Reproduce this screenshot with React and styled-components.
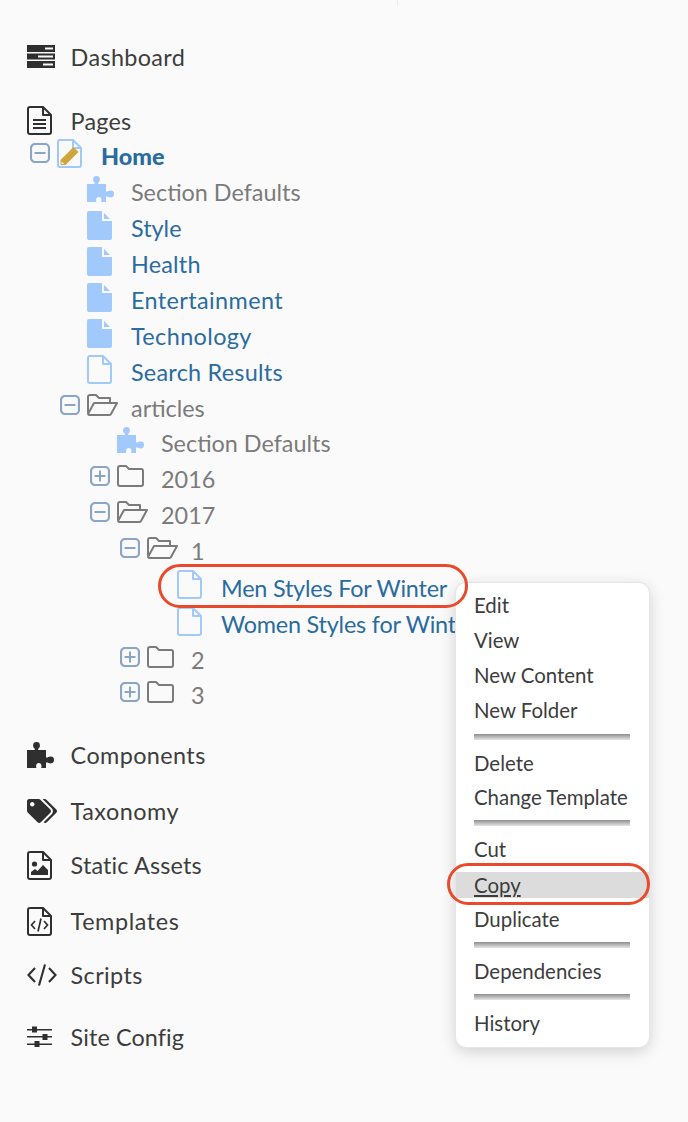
import React from 'react';
import styled, { createGlobalStyle } from 'styled-components';
import { FaTags } from 'react-icons/fa';

const GlobalStyle = createGlobalStyle`
  html, body {
    margin: 0;
    padding: 0;
    background: #fafafa;
  }
  body {
    font-family: 'Lato', 'Noto Sans', sans-serif;
  }
`;

const INK = '#3d3d3d';
const LINK = '#2a6c9f';
const MUTED = '#7b7b7b';
const SKY = '#a2c9fb';
const BOX = '#8aa5c5';
const RED = '#e94a2b';

const Page = styled.div`
  position: relative;
  width: 688px;
  height: 1122px;
  overflow: hidden;
  background: #fafafa;
`;

const TopTick = styled.div`
  position: absolute;
  left: 397px;
  top: 0;
  width: 1px;
  height: 6px;
  background: #eeeeee;
`;

const Nav = styled.nav`
  padding: 38px 0 0 27px;
  display: flex;
  flex-direction: column;
`;

const NavRow = styled.div`
  display: grid;
  grid-template-columns: 43.6px auto;
  align-items: center;
  height: 36px;
  margin-top: ${p => p.$gap || 0}px;
  color: ${INK};
  font-size: 23.4px;
  letter-spacing: ${p => p.$track ?? 0.2}px;
`;

const NavLabel = styled.span`
  padding-top: ${p => (p.$low ? 2 : 0)}px;
`;

const NavIcon = styled.span`
  display: flex;
  align-items: center;
  color: #2f2f2f;
`;

const Tree = styled.ul`
  list-style: none;
  margin: 0;
  padding: 0 0 0 3px;
`;

const TreeRow = styled.li`
  display: grid;
  grid-template-columns: 27px 44px auto;
  align-items: center;
  height: ${p => p.$h || 36}px;
  margin-left: ${p => p.$depth * 30}px;
  font-size: 23.4px;
  letter-spacing: ${p => p.$track ?? 0}px;
  white-space: nowrap;
  color: ${p => (p.$link ? LINK : MUTED)};
  font-weight: ${p => (p.$bold ? 900 : 400)};
`;

const Slot = styled.span`
  display: flex;
  align-items: center;
  height: 100%;
  transform: translateY(-3px);
`;

const Menu = styled.ul`
  position: absolute;
  left: 456px;
  top: 583px;
  width: 193px;
  height: 464px;
  box-sizing: border-box;
  margin: 0;
  padding: 3px 0 0;
  list-style: none;
  background: #ffffff;
  border-radius: 10px;
  box-shadow: 0 0 0 1px #e6e6e6, 0 4px 16px rgba(0, 0, 0, 0.18);
  color: ${INK};
  font-size: 20.4px;
`;

const MenuItem = styled.li`
  display: flex;
  align-items: center;
  box-sizing: border-box;
  height: ${p => p.$h || 35}px;
  margin-top: ${p => p.$top || 0}px;
  padding: ${p => (p.$active ? 0 : 2)}px 0 0 18px;
  background: ${p => (p.$active ? '#dcdcdc' : 'transparent')};
  text-decoration: ${p => (p.$active ? 'underline' : 'none')};
  white-space: nowrap;
`;

const MenuRule = styled.li`
  height: 6px;
  margin: ${p => p.$top || 7}px 19px 4px 18px;
  background: linear-gradient(#8e8e8e, #e6e6e6);
`;

const Callout = styled.div`
  position: absolute;
  left: ${p => p.$x}px;
  top: ${p => p.$y}px;
  width: ${p => p.$w}px;
  height: ${p => p.$h}px;
  box-sizing: border-box;
  border: 3px solid ${RED};
  border-radius: 24px;
  pointer-events: none;
`;

const Server = () => (
  <svg width="28" height="23" viewBox="0 0 28 23">
    <path
      fill="#2f2f2f"
      fillRule="evenodd"
      d="M0 0h28v7H0zM18 2.5v2h8v-2zM0 8.5h28v6H0zM11 10.5v2h15v-2zM0 16h28v7H0zM16 18.5v2h10v-2z"
    />
  </svg>
);

const DocOutline = ({ children, color = '#2f2f2f' }) => (
  <svg width="25" height="29" viewBox="0 0 25 29" fill="none">
    <path
      d="M3 1H16L24 9V26a2 2 0 0 1-2 2H3a2 2 0 0 1-2-2V3a2 2 0 0 1 2-2ZM16 1V9H24"
      stroke={color}
      strokeWidth="2"
      strokeLinejoin="round"
    />
    {children}
  </svg>
);

const PagesIcon = () => (
  <DocOutline>
    <path d="M6 14H19M6 18H19M6 22H19" stroke="#2f2f2f" strokeWidth="2" />
  </DocOutline>
);

const ImageDoc = () => (
  <DocOutline>
    <circle cx="7.5" cy="13" r="2.6" fill="#2f2f2f" />
    <path d="M4 24V21L8 18L10.5 20L16 14L21 19V24Z" fill="#2f2f2f" />
  </DocOutline>
);

const CodeDoc = () => (
  <DocOutline>
    <path
      d="M8 14L4.5 18L8 22M17 14L20.5 18L17 22M14 11.5L11 24.5"
      stroke="#2f2f2f"
      strokeWidth="1.7"
    />
  </DocOutline>
);

const Code = () => (
  <svg width="30" height="22" viewBox="0 0 30 22" fill="none">
    <path d="M8 4L1.5 11L8 18M22 4L28.5 11L22 18M18 0.5L12 21.5" stroke="#2f2f2f" strokeWidth="2.1" />
  </svg>
);

const Sliders = () => (
  <svg width="25" height="22" viewBox="0 0 25 22">
    <path d="M0 3h25v1.6H0zM0 10h25v1.6H0zM0 17.5h25v1.6H0z" fill="#2f2f2f" />
    <path d="M5 0.5h5v6H5zM15.5 8h5v6h-5zM7.5 15h5v6h-5z" fill="#2f2f2f" />
  </svg>
);

const Puzzle = ({ color }) => (
  <svg width="27" height="26" viewBox="0 0 27 26">
    <circle cx="9.5" cy="3.4" r="3.4" fill={color} />
    <circle cx="23.6" cy="18" r="3.4" fill={color} />
    <path
      fill={color}
      d="M7.8 5H11.2V8H19V15.5H22V20.5H19V26H14.2C14.8 24 14.6 21 11.8 21C9 21 8.8 24 9.4 26H0V8H7.8Z"
    />
  </svg>
);

const FileSolid = () => (
  <svg width="25" height="29" viewBox="0 0 25 29">
    <path fill={SKY} d="M2 0H15V10H25V27a2 2 0 0 1-2 2H2a2 2 0 0 1-2-2V2a2 2 0 0 1 2-2Z" />
    <path fill={SKY} d="M17 2L23 8H17Z" />
  </svg>
);

const FileLine = ({ children }) => <DocOutline color={SKY}>{children}</DocOutline>;

const Pencil = () => (
  <FileLine>
    <path fill="#cfa63c" d="M3.5 21L16.5 8L21.5 13L8.5 26H3.5Z" />
    <path fill="#ffffff" d="M4.6 22.6L7 25H4.6Z" />
  </FileLine>
);

const Toggle = ({ open }) => (
  <svg width="20" height="20" viewBox="0 0 20 20" fill="none">
    <rect x="1" y="1" width="18" height="18" rx="4" stroke={BOX} strokeWidth="2.2" />
    <path d={open ? 'M4.5 10H15.5' : 'M4.5 10H15.5M10 4.5V15.5'} stroke={BOX} strokeWidth="2" />
  </svg>
);

const Folder = () => (
  <svg width="27" height="22" viewBox="0 0 27 22" fill="none">
    <path
      d="M3 1H9L12 4H24a2 2 0 0 1 2 2V19a2 2 0 0 1-2 2H3a2 2 0 0 1-2-2V3a2 2 0 0 1 2-2Z"
      stroke={MUTED}
      strokeWidth="2"
      strokeLinejoin="round"
    />
  </svg>
);

const FolderOpen = () => (
  <svg width="31" height="22" viewBox="0 0 31 22" fill="none">
    <path
      d="M1 19V3a2 2 0 0 1 2-2H9L12 4H23V8M1 20L7 9H30L24 20a2 2 0 0 1-1.5 1H2.5A1.5 1.5 0 0 1 1 20Z"
      stroke={MUTED}
      strokeWidth="2"
      strokeLinejoin="round"
    />
  </svg>
);

const TREE = [
  { depth: 0, toggle: 'open', icon: <Pencil />, label: 'Home', link: true, bold: true },
  { depth: 1, icon: <Puzzle color={SKY} />, label: 'Section Defaults' },
  { depth: 1, icon: <FileSolid />, label: 'Style', link: true },
  { depth: 1, icon: <FileSolid />, label: 'Health', link: true, track: 0.2 },
  { depth: 1, icon: <FileSolid />, label: 'Entertainment', link: true, track: 0.4 },
  { depth: 1, icon: <FileSolid />, label: 'Technology', link: true, track: 0.4 },
  { depth: 1, icon: <FileLine />, label: 'Search Results', link: true, track: 0.25 },
  { depth: 1, toggle: 'open', icon: <FolderOpen />, label: 'articles', h: 35 },
  { depth: 2, icon: <Puzzle color={SKY} />, label: 'Section Defaults' },
  { depth: 2, toggle: 'closed', icon: <Folder />, label: '2016' },
  { depth: 2, toggle: 'open', icon: <FolderOpen />, label: '2017' },
  { depth: 3, toggle: 'open', icon: <FolderOpen />, label: '1' },
  { depth: 4, icon: <FileLine />, label: 'Men Styles For Winter', link: true, h: 37, track: -0.2 },
  { depth: 4, icon: <FileLine />, label: 'Women Styles for Winter', link: true, track: -0.2 },
  { depth: 3, toggle: 'closed', icon: <Folder />, label: '2', h: 35 },
  { depth: 3, toggle: 'closed', icon: <Folder />, label: '3', h: 35 }
];

const App = () => (
  <Page>
    <GlobalStyle />
    <TopTick />
    <Nav>
      <NavRow $track={0.35}>
        <NavIcon><Server /></NavIcon>
        <NavLabel $low>Dashboard</NavLabel>
      </NavRow>
      <NavRow $gap={28}>
        <NavIcon><PagesIcon /></NavIcon>
        <NavLabel $low>Pages</NavLabel>
      </NavRow>
      <Tree>
        {TREE.map((row, i) => (
          <TreeRow
            key={i}
            $depth={row.depth}
            $h={row.h}
            $link={row.link}
            $bold={row.bold}
            $track={row.track}
          >
            <Slot>{row.toggle && <Toggle open={row.toggle === 'open'} />}</Slot>
            <Slot>{row.icon}</Slot>
            {row.label}
          </TreeRow>
        ))}
      </Tree>
      <NavRow $gap={25} $track={0.4}>
        <NavIcon><Puzzle color="#2f2f2f" /></NavIcon>
        <NavLabel>Components</NavLabel>
      </NavRow>
      <NavRow $gap={20} $track={0.5}>
        <NavIcon><FaTags size={30} /></NavIcon>
        <NavLabel>Taxonomy</NavLabel>
      </NavRow>
      <NavRow $gap={18} $track={0.15}>
        <NavIcon><ImageDoc /></NavIcon>
        <NavLabel>Static Assets</NavLabel>
      </NavRow>
      <NavRow $gap={20} $track={0.6}>
        <NavIcon><CodeDoc /></NavIcon>
        <NavLabel>Templates</NavLabel>
      </NavRow>
      <NavRow $gap={18} $track={0.4}>
        <NavIcon><Code /></NavIcon>
        <NavLabel>Scripts</NavLabel>
      </NavRow>
      <NavRow $gap={26} $track={0.1}>
        <NavIcon><Sliders /></NavIcon>
        <NavLabel>Site Config</NavLabel>
      </NavRow>
    </Nav>

    <Menu>
      <MenuItem>Edit</MenuItem>
      <MenuItem $h={36}>View</MenuItem>
      <MenuItem $h={34}>New Content</MenuItem>
      <MenuItem $h={36}>New Folder</MenuItem>
      <MenuRule />
      <MenuItem>Delete</MenuItem>
      <MenuItem $h={34}>Change Template</MenuItem>
      <MenuRule />
      <MenuItem>Cut</MenuItem>
      <MenuItem $active $h={26} $top={7}>Copy</MenuItem>
      <MenuItem $h={39}>Duplicate</MenuItem>
      <MenuRule $top={5} />
      <MenuItem>Dependencies</MenuItem>
      <MenuRule />
      <MenuItem>History</MenuItem>
    </Menu>

    <Callout $x={158} $y={564} $w={310} $h={44} />
    <Callout $x={447} $y={863} $w={203} $h={42} />
  </Page>
);

export default App;
